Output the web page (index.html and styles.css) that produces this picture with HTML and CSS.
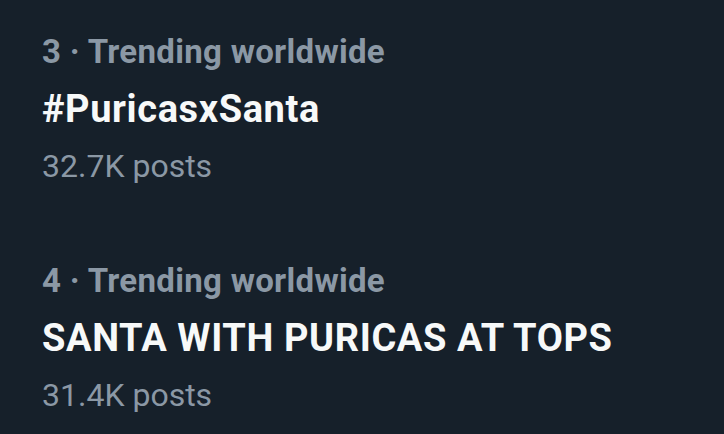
FILE: index.html
```html
<!DOCTYPE html>
<html>
<head>
<meta charset="utf-8">
<link rel="stylesheet" href="styles.css">
</head>
<body>
<div class="list">
  <div class="trend">
    <div class="meta">3 · Trending worldwide</div>
    <div class="title">#PuricasxSanta</div>
    <div class="count">32.7K posts</div>
  </div>
  <div class="trend">
    <div class="meta">4 · Trending worldwide</div>
    <div class="title">SANTA WITH PURICAS AT TOPS</div>
    <div class="count">31.4K posts</div>
  </div>
</div>
</body>
</html>
```
FILE: styles.css
```css
html, body {
  margin: 0;
  padding: 0;
  background: #16202a;
  width: 724px;
  height: 434px;
  overflow: hidden;
}
body {
  font-family: Roboto, "Noto Sans", sans-serif;
}
.list {
  display: flex;
  flex-direction: column;
  gap: 75px;
  padding: 32px 0 0 42px;
}
.trend {
  display: flex;
  flex-direction: column;
  gap: 13px;
}
.meta {
  color: #8b98a5;
  font-weight: 700;
  font-size: 33px;
  line-height: 40px;
  letter-spacing: 0.3px;
}
.title {
  color: #f7f9f9;
  font-weight: 700;
  font-size: 38px;
  line-height: 48px;
  letter-spacing: 0.6px;
}
.count {
  color: #8b98a5;
  font-size: 32px;
  line-height: 40px;
}
```
